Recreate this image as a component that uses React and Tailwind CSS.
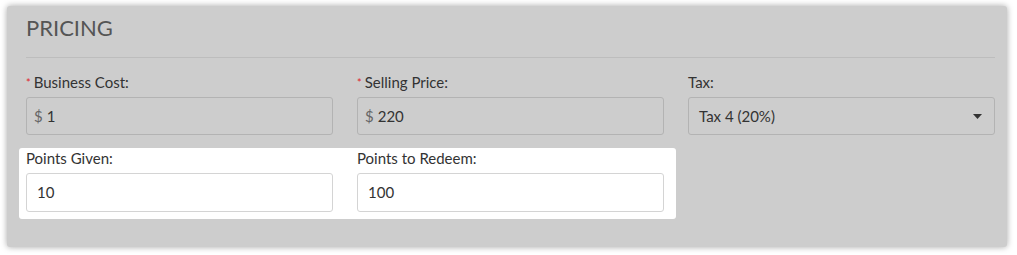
import React from "react";

const font = { fontFamily: "Lato, 'Open Sans', sans-serif" };

const Label = ({ children, required }) => (
  <div className="h-[21px] text-[15px] leading-[21px] text-[#333]">
    {required && <span className="text-[#e0242b] text-[11px] align-top mr-[3px]">*</span>}
    {children}
  </div>
);

const ReadOnlyInput = ({ value }) => (
  <div className="mt-[4px] h-[38px] w-[307px] rounded-[3px] border border-[#b3b3b3] flex items-center px-[7px] text-[15px] text-[#333]">
    <span className="text-[#666] mr-[4px]">$</span>
    {value}
  </div>
);

const TextInput = ({ value }) => (
  <div className="mt-[4px] h-[39px] w-[307px] rounded-[3px] border border-[#d4d4d4] bg-white flex items-center px-[10px] text-[15px] text-[#333]">
    {value}
  </div>
);

export default function App() {
  return (
    <div className="w-[1017px] h-[255px] bg-white pt-[6px] pl-[7px]" style={font}>
      <div className="w-[1000px] h-[241px] bg-[#cdcdcd] rounded-[3px] shadow-[0_0_6px_rgba(0,0,0,0.35)] pl-[12px] pr-[12px] pt-[9px]">
        <div className="pl-[7px]">
          <h2 className="text-[22px] leading-[26px] text-[#555]">PRICING</h2>
          <div className="mt-[16px] h-px bg-[#bdbdbd] w-[969px]" />
        </div>

        <div className="mt-[14px] pl-[7px] flex gap-[24px]">
          <div>
            <Label required>Business Cost:</Label>
            <ReadOnlyInput value="1" />
          </div>
          <div>
            <Label required>Selling Price:</Label>
            <ReadOnlyInput value="220" />
          </div>
          <div>
            <Label>Tax:</Label>
            <div className="mt-[4px] h-[38px] w-[307px] rounded-[3px] border border-[#b3b3b3] flex items-center justify-between pl-[10px] pr-[12px] text-[15px] text-[#333]">
              <span>Tax 4 (20%)</span>
              <svg width="9" height="5" viewBox="0 0 9 5">
                <path d="M0 0h9L4.5 5z" fill="#333" />
              </svg>
            </div>
          </div>
        </div>

        <div className="mt-[13px] w-[657px] h-[71px] bg-white rounded-[3px] pl-[7px] flex gap-[24px]">
          <div>
            <Label>Points Given:</Label>
            <TextInput value="10" />
          </div>
          <div>
            <Label>Points to Redeem:</Label>
            <TextInput value="100" />
          </div>
        </div>
      </div>
    </div>
  );
}
